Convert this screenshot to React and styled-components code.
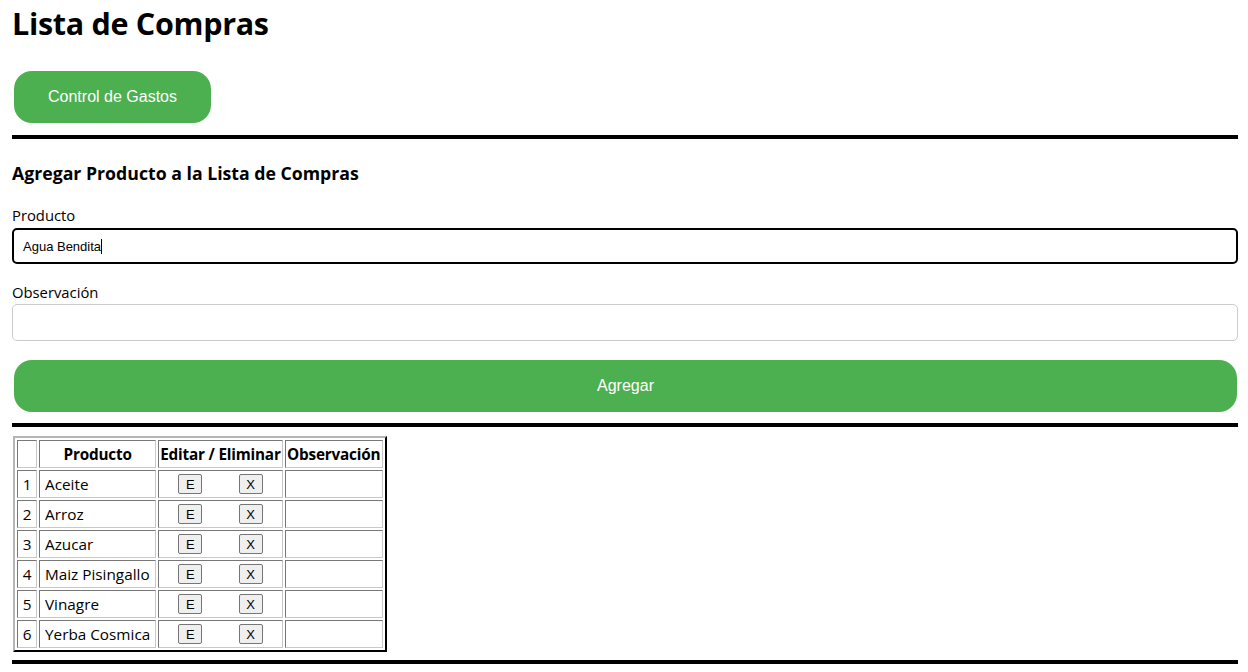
import React from "react";
import styled, { createGlobalStyle } from "styled-components";

const Global = createGlobalStyle`
  html, body { margin: 0; padding: 0; background: #fff; }
  body { font-family: "Open Sans", "Noto Sans", sans-serif; color: #000; }
`;

const Page = styled.div`
  padding: 0 10px 0 12px;
  display: flex;
  flex-direction: column;
`;

const Title = styled.h1`
  margin: 0;
  padding-top: 2px;
  font-size: 30.5px;
  line-height: 42px;
  font-weight: 700;
  letter-spacing: -0.3px;
`;

const GreenButton = styled.button`
  box-sizing: border-box;
  align-self: ${(p) => (p.$full ? "stretch" : "flex-start")};
  margin: ${(p) => p.$margin};
  width: ${(p) => (p.$full ? "auto" : "197px")};
  height: 52px;
  border: none;
  border-radius: 18px;
  background: #4caf50;
  color: #fff;
  font-family: "Liberation Sans", Arial, sans-serif;
  font-size: 16px;
  cursor: pointer;
`;

const Rule = styled.div`
  height: 4px;
  background: #000;
  margin: ${(p) => p.$margin};
`;

const SubTitle = styled.h3`
  margin: 21px 0 0;
  font-size: 17.7px;
  line-height: 26px;
  font-weight: 700;
`;

const Label = styled.label`
  display: block;
  margin-top: ${(p) => p.$top};
  font-size: 14.8px;
  line-height: 20px;
`;

const TextInput = styled.input`
  box-sizing: border-box;
  display: block;
  width: 100%;
  margin-top: 2px;
  height: 37px;
  border: 1px solid #ccc;
  border-radius: 5px;
  padding: 0 10px;
  font-family: "Liberation Sans", Arial, sans-serif;
  font-size: 13px;
  color: #000;
  outline: none;
  background: #fff;
`;

const Caret = styled.span`
  display: inline-block;
  width: 1px;
  height: 15px;
  background: #000;
  vertical-align: -3px;
`;

const FakeInputText = styled.div`
  box-sizing: border-box;
  display: flex;
  align-items: center;
  width: 100%;
  margin-top: 3px;
  height: 36px;
  border: 2px solid #000;
  border-radius: 5px;
  padding: 0 9px;
  font-family: "Liberation Sans", Arial, sans-serif;
  font-size: 13px;
`;

const Table = styled.table`
  align-self: flex-start;
  margin: 9px 0 0 1px;
  border-collapse: separate;
  border-spacing: 2px;
  border: 2px outset #888;
  border-color: #b5b5b5 #333 #333 #b5b5b5;
  font-size: 15.3px;
`;

const Th = styled.th`
  border: 1px solid #777;
  border-color: #777 #c8c8c8 #c8c8c8 #777;
  padding: 1px;
  height: 24px;
  font-weight: 700;
  width: ${(p) => p.$w}px;
  white-space: nowrap;
  letter-spacing: -0.2px;
`;

const Td = styled.td`
  border: 1px solid #777;
  border-color: #777 #c8c8c8 #c8c8c8 #777;
  padding: 1px ${(p) => (p.$num ? "1px" : "5px")};
  height: 24px;
  text-align: ${(p) => (p.$num ? "center" : "left")};
  white-space: nowrap;
`;

const Actions = styled.div`
  display: flex;
  justify-content: space-around;
  align-items: center;
`;

const SmallButton = styled.button`
  box-sizing: border-box;
  width: 24px;
  height: 20px;
  padding: 0;
  border: 1px solid #767676;
  border-radius: 2px;
  background: #efefef;
  font-family: "Liberation Sans", Arial, sans-serif;
  font-size: 13px;
  color: #000;
`;

const items = ["Aceite", "Arroz", "Azucar", "Maiz Pisingallo", "Vinagre", "Yerba Cosmica"];

export default function App() {
  return (
    <>
      <Global />
      <Page>
        <Title>Lista de Compras</Title>
        <GreenButton $margin="27px 0 0 2px">Control de Gastos</GreenButton>
        <Rule $margin="12px 0 0" />
        <SubTitle>Agregar Producto a la Lista de Compras</SubTitle>
        <Label $top="19px">Producto</Label>
        <FakeInputText>
          Agua Bendita<Caret />
        </FakeInputText>
        <Label $top="18px">Observación</Label>
        <TextInput />
        <GreenButton $full $margin="19px 1px 0 2px">Agregar</GreenButton>
        <Rule $margin="11px 0 0" />
        <Table>
          <thead>
            <tr>
              <Th $w={16}></Th>
              <Th $w={112}>Producto</Th>
              <Th $w={120}>Editar / Eliminar</Th>
              <Th $w={94}>Observación</Th>
            </tr>
          </thead>
          <tbody>
            {items.map((it, i) => (
              <tr key={it}>
                <Td $num>{i + 1}</Td>
                <Td>{it}</Td>
                <Td $num>
                  <Actions>
                    <SmallButton>E</SmallButton>
                    <SmallButton>X</SmallButton>
                  </Actions>
                </Td>
                <Td></Td>
              </tr>
            ))}
          </tbody>
        </Table>
        <Rule $margin="8px 0 0" />
      </Page>
    </>
  );
}
